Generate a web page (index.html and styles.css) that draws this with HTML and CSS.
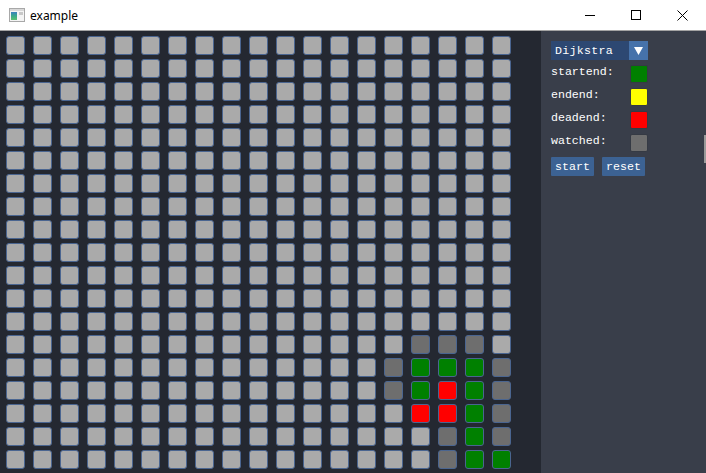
FILE: index.html
```html
<!DOCTYPE html>
<html>
<head>
<meta charset="utf-8">
<title>example</title>
<link rel="stylesheet" href="styles.css">
</head>
<body>
<div class="window">
  <header class="titlebar">
    <div class="title">
      <svg class="app-icon" width="16" height="14" viewBox="0 0 16 14">
        <rect x="0.5" y="0.5" width="15" height="13" fill="#f4f4f4" stroke="#a8a8a8"/>
        <rect x="1" y="1" width="14" height="2" fill="#d8d8d8"/>
        <defs><linearGradient id="lg" x1="0" y1="0" x2="0" y2="1"><stop offset="0" stop-color="#3a7fc0"/><stop offset="0.5" stop-color="#3aa98a"/><stop offset="1" stop-color="#5cc070"/></linearGradient></defs>
        <rect x="2" y="4" width="6" height="8" fill="url(#lg)"/>
        <rect x="10" y="4" width="4" height="3" fill="#c8c8c8"/>
      </svg>
      <span class="title-text">example</span>
    </div>
    <div class="controls">
      <span class="ctl"><svg width="10" height="10" viewBox="0 0 10 10"><path d="M0 5.5H10" stroke="#000" stroke-width="1"/></svg></span>
      <span class="ctl"><svg width="10" height="10" viewBox="0 0 10 10"><rect x="0.5" y="0.5" width="9" height="9" fill="none" stroke="#000" stroke-width="1"/></svg></span>
      <span class="ctl"><svg width="11" height="11" viewBox="0 0 11 11"><path d="M0.5 0.5L10.5 10.5M10.5 0.5L0.5 10.5" stroke="#000" stroke-width="1"/></svg></span>
    </div>
  </header>
  <main class="content">
    <section class="board">
      <div class="grid">
        <i></i><i></i><i></i><i></i><i></i><i></i><i></i><i></i><i></i><i></i><i></i><i></i><i></i><i></i><i></i><i></i><i></i><i></i><i></i>
        <i></i><i></i><i></i><i></i><i></i><i></i><i></i><i></i><i></i><i></i><i></i><i></i><i></i><i></i><i></i><i></i><i></i><i></i><i></i>
        <i></i><i></i><i></i><i></i><i></i><i></i><i></i><i></i><i></i><i></i><i></i><i></i><i></i><i></i><i></i><i></i><i></i><i></i><i></i>
        <i></i><i></i><i></i><i></i><i></i><i></i><i></i><i></i><i></i><i></i><i></i><i></i><i></i><i></i><i></i><i></i><i></i><i></i><i></i>
        <i></i><i></i><i></i><i></i><i></i><i></i><i></i><i></i><i></i><i></i><i></i><i></i><i></i><i></i><i></i><i></i><i></i><i></i><i></i>
        <i></i><i></i><i></i><i></i><i></i><i></i><i></i><i></i><i></i><i></i><i></i><i></i><i></i><i></i><i></i><i></i><i></i><i></i><i></i>
        <i></i><i></i><i></i><i></i><i></i><i></i><i></i><i></i><i></i><i></i><i></i><i></i><i></i><i></i><i></i><i></i><i></i><i></i><i></i>
        <i></i><i></i><i></i><i></i><i></i><i></i><i></i><i></i><i></i><i></i><i></i><i></i><i></i><i></i><i></i><i></i><i></i><i></i><i></i>
        <i></i><i></i><i></i><i></i><i></i><i></i><i></i><i></i><i></i><i></i><i></i><i></i><i></i><i></i><i></i><i></i><i></i><i></i><i></i>
        <i></i><i></i><i></i><i></i><i></i><i></i><i></i><i></i><i></i><i></i><i></i><i></i><i></i><i></i><i></i><i></i><i></i><i></i><i></i>
        <i></i><i></i><i></i><i></i><i></i><i></i><i></i><i></i><i></i><i></i><i></i><i></i><i></i><i></i><i></i><i></i><i></i><i></i><i></i>
        <i></i><i></i><i></i><i></i><i></i><i></i><i></i><i></i><i></i><i></i><i></i><i></i><i></i><i></i><i></i><i></i><i></i><i></i><i></i>
        <i></i><i></i><i></i><i></i><i></i><i></i><i></i><i></i><i></i><i></i><i></i><i></i><i></i><i></i><i></i><i></i><i></i><i></i><i></i>
        <i></i><i></i><i></i><i></i><i></i><i></i><i></i><i></i><i></i><i></i><i></i><i></i><i></i><i></i><i></i><i class="w"></i><i class="w"></i><i class="w"></i><i></i>
        <i></i><i></i><i></i><i></i><i></i><i></i><i></i><i></i><i></i><i></i><i></i><i></i><i></i><i></i><i class="w"></i><i class="g"></i><i class="g"></i><i class="g"></i><i class="w"></i>
        <i></i><i></i><i></i><i></i><i></i><i></i><i></i><i></i><i></i><i></i><i></i><i></i><i></i><i></i><i class="w"></i><i class="g"></i><i class="r"></i><i class="g"></i><i class="w"></i>
        <i></i><i></i><i></i><i></i><i></i><i></i><i></i><i></i><i></i><i></i><i></i><i></i><i></i><i></i><i></i><i class="r"></i><i class="r"></i><i class="g"></i><i class="w"></i>
        <i></i><i></i><i></i><i></i><i></i><i></i><i></i><i></i><i></i><i></i><i></i><i></i><i></i><i></i><i></i><i></i><i class="w"></i><i class="g"></i><i class="w"></i>
        <i></i><i></i><i></i><i></i><i></i><i></i><i></i><i></i><i></i><i></i><i></i><i></i><i></i><i></i><i></i><i></i><i class="w"></i><i class="g"></i><i class="g"></i>
      </div>
    </section>
    <aside class="panel">
      <div class="combo">
        <span class="combo-text">Dijkstra</span>
        <span class="combo-btn"><svg width="9" height="8" viewBox="0 0 9 8"><path d="M0 0H9L4.5 8Z" fill="#fff"/></svg></span>
      </div>
      <div class="legend-row"><span class="legend-label">startend:</span><span class="swatch sw-green"></span></div>
      <div class="legend-row"><span class="legend-label">endend:</span><span class="swatch sw-yellow"></span></div>
      <div class="legend-row"><span class="legend-label">deadend:</span><span class="swatch sw-red"></span></div>
      <div class="legend-row"><span class="legend-label">watched:</span><span class="swatch sw-gray"></span></div>
      <div class="buttons">
        <span class="btn">start</span>
        <span class="btn">reset</span>
      </div>
    </aside>
  </main>
</div>
</body>
</html>
```
FILE: styles.css
```css
html, body {
  margin: 0;
  padding: 0;
}
body {
  width: 706px;
  height: 473px;
  overflow: hidden;
  background: #242831;
}
.window {
  display: flex;
  flex-direction: column;
  width: 706px;
  height: 473px;
}
.titlebar {
  height: 30px;
  flex: none;
  background: #ffffff;
  border-bottom: 1px solid #a4a4a4;
  display: flex;
  align-items: center;
  justify-content: space-between;
}
.title {
  display: flex;
  align-items: center;
  padding-left: 9px;
  gap: 5px;
}
.app-icon {
  display: block;
}
.title-text {
  font-family: "Noto Sans", "Liberation Sans", sans-serif;
  font-size: 12px;
  color: #000;
}
.controls {
  display: flex;
  height: 30px;
  padding-right: 1px;
}
.ctl {
  width: 46px;
  height: 30px;
  display: flex;
  align-items: center;
  justify-content: center;
}
.ctl svg {
  display: block;
}
.content {
  flex: 1;
  display: flex;
  min-height: 0;
}
.board {
  width: 541px;
  flex: none;
  box-sizing: border-box;
  background: #242831;
  padding: 5px 0 0 6px;
}
.grid {
  display: grid;
  grid-template-columns: repeat(19, 19px);
  grid-auto-rows: 19px;
  column-gap: 8px;
  row-gap: 4px;
}
.grid i {
  display: block;
  box-sizing: border-box;
  background: #aaaaaa;
  border: 1px solid #4a6590;
  border-radius: 3px;
}
.grid i.w { background: #6e6e6e; }
.grid i.g { background: #008000; }
.grid i.r { background: #ff0000; }
.panel {
  flex: 1;
  position: relative;
  background: #393e4a;
  padding: 10px 0 0 10px;
  display: flex;
  flex-direction: column;
  gap: 5px;
  font-family: "Liberation Mono", "DejaVu Sans Mono", monospace;
  font-size: 11.6px;
  color: #ffffff;
}
.panel::after {
  content: "";
  position: absolute;
  right: 0;
  top: 104px;
  width: 2px;
  height: 28px;
  background: #9a9a9a;
}
.combo {
  display: flex;
  width: 97px;
  height: 19px;
}
.combo-text {
  flex: 1;
  background: #2d4872;
  padding-left: 4px;
  display: flex;
  align-items: center;
  letter-spacing: 0.3px;
}
.combo-btn {
  width: 19px;
  background: #4672aa;
  display: flex;
  align-items: center;
  justify-content: center;
}
.combo-btn svg {
  display: block;
}
.legend-row {
  display: flex;
  align-items: flex-start;
  justify-content: space-between;
  width: 97px;
  height: 18px;
}
.legend-label {
  line-height: 14px;
}
.swatch {
  width: 18px;
  height: 18px;
  box-sizing: border-box;
  border: 1px solid #353a44;
  border-radius: 2px;
}
.sw-green { background: #008000; }
.sw-yellow { background: #ffff00; }
.sw-red { background: #ff0000; }
.sw-gray { background: #6e6e6e; }
.buttons {
  display: flex;
  gap: 8px;
}
.btn {
  width: 43px;
  height: 19px;
  background: #3c6293;
  display: flex;
  align-items: center;
  justify-content: center;
  border-radius: 1px;
}
```
